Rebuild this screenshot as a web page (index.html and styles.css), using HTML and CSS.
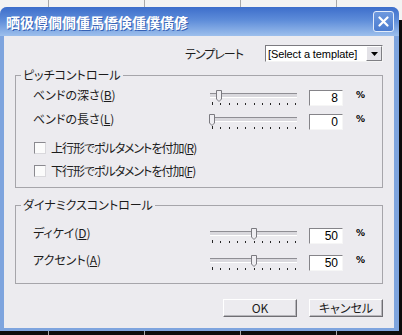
FILE: index.html
```html
<!DOCTYPE html>
<html lang="ja">
<head>
    <meta charset="UTF-8">
    <title>ピッチ/ダイナミクス</title>
    <link rel="stylesheet" href="styles.css">
</head>
<body>
    <!-- gemeinsame Teile der Schieberegler -->
    <svg class="defs" width="0" height="0">
        <symbol id="slider-scale" viewBox="0 0 92 18">
            <rect x="2" y="4" width="87" height="3" fill="#d9d8dd"/>
            <path d="M2 3.5h87" stroke="#8f8e94"/>
            <path d="M2 7.5h87" stroke="#ffffff"/>
            <path d="M4.5 12v3M12.5 13v2M21.5 13v2M29.5 13v2M37.5 13v2M46.5 13v2M54.5 13v2M62.5 13v2M71.5 13v2M79.5 13v2M87.5 13v2" stroke="#262626"/>
        </symbol>
        <symbol id="slider-thumb" viewBox="-3 0 6 13" overflow="visible">
            <path d="M-2.5 0.5h5v8.5l-2.5 2.5l-2.5-2.5z" fill="#efeef2" stroke="#7b7a80"/>
        </symbol>
    </svg>

    <div class="window">
        <div class="titlebar">
            <span class="title">晒彶僔僩僩偅馬僑倹偅僕僙偐</span>
            <span class="close-btn">
                <svg width="11" height="11" viewBox="0 0 11 11"><path d="M1.5 1.5l8 8M9.5 1.5l-8 8" stroke="#fff" stroke-width="2.2" stroke-linecap="round"/></svg>
            </span>
        </div>

        <div class="client">
            <div class="template-row">
                <span class="template-label">テンプレート</span>
                <div class="combo">
                    <span class="combo-text">[Select a template]</span>
                    <span class="combo-arrow">
                        <svg width="7" height="4" viewBox="0 0 7 4"><path d="M0 0h7l-3.5 4z" fill="#000"/></svg>
                    </span>
                </div>
            </div>

            <!-- ピッチ -->
            <fieldset class="group group-pitch">
                <legend>ピッチコントロール</legend>
                <div class="slider-row">
                    <span class="row-label">ベンドの深さ(<u>B</u>)</span>
                    <svg class="slider" width="92" height="18" viewBox="0 0 92 18">
                        <use href="#slider-scale" width="92" height="18"/>
                        <use href="#slider-thumb" x="8" y="0" width="6" height="13"/>
                    </svg>
                    <span class="edit">8</span>
                    <span class="unit">%</span>
                </div>
                <div class="slider-row">
                    <span class="row-label">ベンドの長さ(<u>L</u>)</span>
                    <svg class="slider" width="92" height="18" viewBox="0 0 92 18">
                        <use href="#slider-scale" width="92" height="18"/>
                        <use href="#slider-thumb" x="1" y="0" width="6" height="13"/>
                    </svg>
                    <span class="edit">0</span>
                    <span class="unit">%</span>
                </div>
                <label class="check-row first">
                    <span class="check-box"></span>
                    <span class="check-text">上行形でポルタメントを付加(<u>R</u>)</span>
                </label>
                <label class="check-row">
                    <span class="check-box"></span>
                    <span class="check-text">下行形でポルタメントを付加(<u>F</u>)</span>
                </label>
            </fieldset>

            <!-- ダイナミクス -->
            <fieldset class="group group-dyn">
                <legend>ダイナミクスコントロール</legend>
                <div class="slider-row">
                    <span class="row-label">ディケイ(<u>D</u>)</span>
                    <svg class="slider" width="92" height="18" viewBox="0 0 92 18">
                        <use href="#slider-scale" width="92" height="18"/>
                        <use href="#slider-thumb" x="43" y="0" width="6" height="13"/>
                    </svg>
                    <span class="edit">50</span>
                    <span class="unit">%</span>
                </div>
                <div class="slider-row">
                    <span class="row-label">アクセント(<u>A</u>)</span>
                    <svg class="slider" width="92" height="18" viewBox="0 0 92 18">
                        <use href="#slider-scale" width="92" height="18"/>
                        <use href="#slider-thumb" x="43" y="0" width="6" height="13"/>
                    </svg>
                    <span class="edit">50</span>
                    <span class="unit">%</span>
                </div>
            </fieldset>

            <div class="buttons">
                <button class="btn">OK</button>
                <button class="btn">キャンセル</button>
            </div>
        </div>
    </div>
</body>
</html>
```

FILE: styles.css
```css
body {
    margin: 0;
    width: 402px;
    height: 335px;
    overflow: hidden;
    font-family: "Noto Sans CJK JP", "Liberation Sans", sans-serif;
    font-feature-settings: "palt" 1;
    font-size: 12px;
    color: #1c1c1c;
    background:
        repeating-linear-gradient(90deg, transparent 0 48px, #a8a8a8 48px 49px, transparent 49px 96px),
        linear-gradient(#f3f3f3 0 20px, #0c0c0c 20px);
}
.defs {
    display: block;
    position: absolute;
    width: 0;
    height: 0;
}
.window {
    margin-top: 7px;
    width: 399px;
    height: 324px;
    border-radius: 7px 7px 0 0;
    background: #7ea4de;
    display: flex;
    flex-direction: column;
}
.titlebar {
    height: 29px;
    flex-shrink: 0;
    display: flex;
    align-items: center;
    justify-content: space-between;
    padding: 0 5px 0 6px;
    border-radius: 7px 7px 0 0;
    background: linear-gradient(#3d6ecb 0%, #5d8cd9 45%, #9dbfec 100%);
}
.title {
    color: #fff;
    font-weight: bold;
    font-size: 14px;
    line-height: 16px;
    text-shadow: 1px 1px 0 #3561b4;
}
.close-btn {
    width: 21px;
    height: 21px;
    box-sizing: border-box;
    border: 1px solid #e2ebf9;
    border-radius: 3px;
    background: linear-gradient(#6d98de, #4b7cd0);
    display: flex;
    align-items: center;
    justify-content: center;
}
.client {
    flex: 1;
    margin: 0 5px 3px 4px;
    background: #ecebef;
    display: flex;
    flex-direction: column;
}
.template-row {
    display: flex;
    justify-content: flex-end;
    align-items: center;
    gap: 22px;
    height: 17px;
    margin: 9px 11px 0 0;
}
.template-label {
    line-height: 14px;
    letter-spacing: -1px;
}
.combo {
    width: 118px;
    height: 17px;
    box-sizing: border-box;
    border: 1px solid;
    border-color: #7b7a80 #f4f4f4 #f4f4f4 #7b7a80;
    background: #fff;
    display: flex;
    align-items: center;
}
.combo-text {
    flex: 1;
    padding-left: 2px;
    font-family: "Liberation Sans", sans-serif;
    font-size: 11px;
    letter-spacing: -0.1px;
    color: #000;
}
.combo-arrow {
    width: 16px;
    height: 15px;
    box-sizing: border-box;
    border: 1px solid;
    border-color: #fff #7f7f84 #7f7f84 #fff;
    background: #e3e2e7;
    display: flex;
    align-items: center;
    justify-content: center;
}
.group {
    margin: 6px 11px 0;
    padding: 3px 0 5px;
    border: 1px solid #a6a5aa;
    min-width: 0;
}
.group legend {
    margin-left: 5px;
    padding: 0 2px;
    line-height: 14px;
}
.group-dyn {
    margin-top: 10px;
    padding: 11px 0 6px;
}
.slider-row {
    display: flex;
    align-items: flex-start;
    height: 24px;
    padding-left: 17px;
}
.group-dyn .slider-row {
    height: 27px;
}
.row-label {
    flex: 1;
    margin-top: 3px;
    line-height: 14px;
}
.slider {
    margin: 5px 9px 0 0;
}
.edit {
    width: 34px;
    height: 16px;
    margin: 5px 13px 0 0;
    box-sizing: border-box;
    border: 1px solid;
    border-color: #858489 #f6f6f6 #f6f6f6 #858489;
    background: #fff;
    padding-right: 4px;
    text-align: right;
    font-family: "Liberation Sans", sans-serif;
    font-size: 12px;
    line-height: 14px;
    color: #000;
}
.unit {
    width: 26px;
    margin-top: 6px;
    font-family: "DejaVu Sans", sans-serif;
    font-weight: bold;
    font-size: 9px;
    line-height: 9px;
    color: #000;
}
.check-row {
    display: flex;
    align-items: center;
    gap: 5px;
    height: 23px;
    padding-left: 18px;
}
.check-row.first {
    margin-top: 3px;
}
.check-text {
    line-height: 14px;
    letter-spacing: -1px;
}
.check-box {
    width: 12px;
    height: 12px;
    box-sizing: border-box;
    border: 1px solid;
    border-color: #8a898f #d9d8dc #d9d8dc #8a898f;
    background: #fbfbfb;
}
.buttons {
    display: flex;
    justify-content: flex-end;
    gap: 12px;
    margin: 15px 11px 0 0;
}
.btn {
    width: 74px;
    height: 18px;
    padding: 0;
    border: 1px solid;
    border-color: #fff #6f6e73 #6f6e73 #fff;
    box-shadow: inset -1px -1px 0 #b7b6bb;
    background: #ecebef;
    font-family: "Noto Sans CJK JP", "Liberation Sans", sans-serif;
    font-feature-settings: "palt" 1;
    font-size: 12px;
    line-height: 14px;
    color: #1c1c1c;
}
```
